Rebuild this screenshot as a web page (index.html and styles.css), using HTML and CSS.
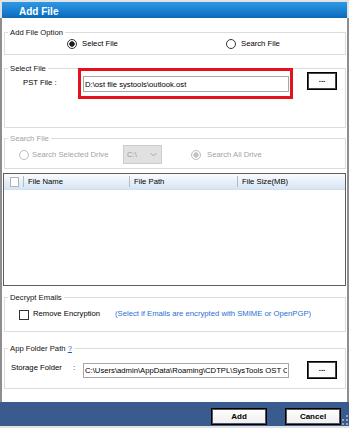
FILE: index.html
```html
<!DOCTYPE html>
<html>
<head>
<meta charset="utf-8">
<title>Add File</title>
<link rel="stylesheet" href="styles.css">
</head>
<body>
<div class="window">
  <div class="titlebar">Add File</div>
  <div class="client">
    <fieldset class="group g-option">
      <legend>Add File Option</legend>
      <div class="option-row">
        <label class="radio-item opt-item"><span class="radio checked"></span>Select File</label>
        <label class="radio-item opt-item"><span class="radio"></span>Search File</label>
      </div>
    </fieldset>

    <fieldset class="group g-select">
      <legend>Select File</legend>
      <div class="select-row">
        <span class="pst-label">PST File :</span>
        <div class="highlight"><input class="textbox" type="text" value="D:\ost file systools\outlook.ost" readonly></div>
        <button class="browse" type="button">...</button>
      </div>
    </fieldset>

    <fieldset class="group g-search">
      <legend>Search File</legend>
      <div class="search-row">
        <label class="radio-item drive-item"><span class="radio off"></span>Search Selected Drive</label>
        <div class="combo"><span class="combo-text">C:\</span><svg class="chev" width="7" height="5" viewBox="0 0 7 5"><path d="M0.5 1 L3.5 4 L6.5 1" fill="none" stroke="#a8a8a8" stroke-width="1"/></svg></div>
        <label class="radio-item all-item"><span class="radio off checked-off"></span>Search All Drive</label>
      </div>
    </fieldset>

    <div class="listview">
      <div class="list-header">
        <div class="col col-check"><span class="hcheck"></span></div>
        <div class="col col-name">File Name</div>
        <div class="col col-path">File Path</div>
        <div class="col col-size">File Size(MB)</div>
      </div>
    </div>

    <fieldset class="group g-decrypt">
      <legend>Decrypt Emails</legend>
      <div class="decrypt-row">
        <span class="checkbox"></span>
        <span class="decrypt-label">Remove Encryption</span>
        <span class="hint">(Select if Emails are encrypted with SMIME or OpenPGP)</span>
      </div>
    </fieldset>

    <fieldset class="group g-app">
      <legend>App Folder Path <a class="help">?</a></legend>
      <div class="app-row">
        <span class="storage-label">Storage Folder</span>
        <span class="colon">:</span>
        <input class="textbox app-box" type="text" value="C:\Users\admin\AppData\Roaming\CDTPL\SysTools OST Converter" readonly>
        <button class="browse app-browse" type="button">...</button>
      </div>
    </fieldset>
  </div>
  <div class="footer">
    <button class="action" type="button">Add</button>
    <button class="action" type="button">Cancel</button>
    <svg class="grip" width="6" height="10" viewBox="0 0 6 10">
      <rect x="4" y="0" width="2" height="2" fill="#9aa6b8"/>
      <rect x="4" y="4" width="2" height="2" fill="#9aa6b8"/>
      <rect x="0" y="4" width="2" height="2" fill="#9aa6b8"/>
      <rect x="4" y="8" width="2" height="2" fill="#9aa6b8"/>
      <rect x="0" y="8" width="2" height="2" fill="#9aa6b8"/>
    </svg>
  </div>
</div>
</body>
</html>
```

FILE: styles.css
```css
* { box-sizing: border-box; }
html, body { margin: 0; padding: 0; }
body {
  width: 349px;
  height: 428px;
  overflow: hidden;
  background: #e2e2e2;
  font-family: "Liberation Sans", Arial, sans-serif;
  font-size: 7.7px;
  color: #000;
}
.window {
  width: 349px;
  height: 428px;
  display: flex;
  flex-direction: column;
  padding: 2px 0;
}
.titlebar {
  height: 16px;
  margin: 0 2px;
  background: linear-gradient(#2f98e6, #1479c8 70%, #0e68b4);
  color: #fff;
  font-weight: bold;
  font-size: 10px;
  line-height: 19px;
  padding-left: 17px;
  overflow: hidden;
}
.client {
  flex: 1;
  background: #fff;
  border-left: 2px solid #8e8e8e;
  border-right: 2px solid #8e8e8e;
  padding: 0 1px 0 2px;
  display: flex;
  flex-direction: column;
}

/* group boxes */
.group {
  margin: 0;
  padding: 0;
  border: 1px solid #dcdcdc;
  min-width: 0;
}
.group legend {
  margin-left: 3px;
  padding: 0 2px;
  line-height: 11px;
  font-size: 7.7px;
  font-weight: normal;
  color: #111;
}
.g-option { margin-top: 9px; }
.g-select { margin-top: 8px; }
.g-search { margin-top: 5px; }
.g-search legend { color: #a3a3a3; }
.g-decrypt { margin-top: 6px; }
.g-app { margin-top: 11px; }

/* radios */
.radio-item {
  display: flex;
  align-items: center;
  line-height: 11px;
  white-space: nowrap;
}
.radio {
  flex: none;
  width: 10px;
  height: 10px;
  border-radius: 50%;
  border: 1px solid #333;
  background: #fff;
}
.radio.checked {
  background: radial-gradient(circle, #1e1e1e 0 2.4px, #fff 3px);
}
.radio.off { border-color: #bdbdbd; }
.radio.checked-off {
  background: radial-gradient(circle, #c4c4c4 0 2.4px, #fff 3px);
}

.option-row {
  height: 16px;
  padding: 0 0 5px 62px;
  display: grid;
  grid-template-columns: 159px auto;
  align-items: center;
}
.opt-item .radio { margin-right: 5px; }

/* select file */
.select-row {
  display: flex;
  align-items: flex-start;
  height: 53px;
  padding-left: 18px;
}
.pst-label {
  width: 55px;
  margin-top: 3px;
  line-height: 11px;
}
.highlight {
  width: 215px;
  height: 31px;
  margin-top: -6px;
  border: 3px solid #e5121d;
  padding: 5px 1px 4px 2px;
}
.textbox {
  display: block;
  width: 206px;
  height: 16px;
  margin: 0;
  padding: 0 1px;
  border: 1px solid #a7a7a7;
  background: #fff;
  font: 7.7px "Liberation Sans", Arial, sans-serif;
  color: #000;
  outline: none;
}
.browse {
  width: 30px;
  height: 18px;
  margin: -2px 0 0 14px;
  padding: 0 0 3px;
  border: 1px solid #000;
  box-shadow: inset 0 0 0 1px #444;
  background: #fdfdfd;
  font: bold 8px "Liberation Sans", Arial, sans-serif;
  color: #000;
  line-height: 12px;
}

/* search file */
.search-row {
  display: flex;
  align-items: flex-start;
  height: 24px;
  padding-left: 14px;
  color: #a3a3a3;
}
.drive-item {
  width: 104px;
  margin-top: 5px;
}
.drive-item .radio { margin-right: 3px; }
.combo {
  width: 39px;
  height: 19px;
  margin-top: 1px;
  background: #e1e1e1;
  border: 1px solid #cccccc;
  display: flex;
  align-items: center;
  justify-content: space-between;
  padding: 0 4px 0 3px;
  color: #9a9a9a;
}
.chev { display: block; }
.all-item {
  margin-left: 29px;
  margin-top: 5px;
}
.all-item .radio { margin-right: 6px; }

/* list view */
.listview {
  margin: 4px 0 0 -1px;
  height: 113px;
  border: 1px solid #5e5e5e;
  background: #fff;
}
.list-header {
  height: 16px;
  display: grid;
  grid-template-columns: 19px 106px 108px 1fr;
  background: linear-gradient(#fbfdff, #e9f1fa 45%, #d7e5f5);
  border-bottom: 1px solid #d4dfec;
}
.col {
  display: flex;
  align-items: center;
  white-space: nowrap;
}
.col-check { padding-left: 6px; }
.hcheck {
  width: 9px;
  height: 10px;
  border: 1px solid #b4b4b4;
  background: #fff;
}
.col-name::before, .col-path::before, .col-size::before {
  content: "";
  flex: none;
  width: 1px;
  height: 11px;
  margin-right: 4px;
  background: #aebccd;
}

/* decrypt */
.decrypt-row {
  display: flex;
  align-items: flex-start;
  height: 28px;
  padding-left: 14px;
  line-height: 11px;
  white-space: nowrap;
}
.checkbox {
  flex: none;
  width: 10px;
  height: 10px;
  margin-top: 7px;
  border: 1px solid #333;
  background: #fff;
}
.decrypt-label {
  width: 82px;
  margin: 5px 0 0 4px;
}
.hint {
  margin-top: 5px;
  color: #1f6fd1;
}

/* app folder */
.help {
  color: #1f5fd1;
  text-decoration: underline;
}
.app-row {
  display: flex;
  align-items: flex-start;
  height: 34px;
  padding-left: 6px;
  line-height: 11px;
  white-space: nowrap;
}
.storage-label {
  width: 62px;
  margin-top: 8px;
}
.colon {
  width: 10px;
  margin-top: 8px;
}
.app-box {
  height: 15px;
  margin-top: 9px;
}
.app-browse {
  margin: 7px 0 0 18px;
}

/* footer */
.footer {
  position: relative;
  height: 24px;
  background: #3a5b8e;
  display: flex;
  justify-content: flex-end;
  gap: 18px;
  padding: 6px 8px 0 0;
}
.action {
  width: 56px;
  height: 17px;
  margin: 0;
  padding: 0;
  border: 1px solid #000;
  box-shadow: inset 0 0 0 1px #555;
  background: linear-gradient(#ffffff, #eeeeee);
  font: bold 8px "Liberation Sans", Arial, sans-serif;
  color: #000;
}
.grip {
  position: absolute;
  right: 1px;
  bottom: 1px;
}
```
